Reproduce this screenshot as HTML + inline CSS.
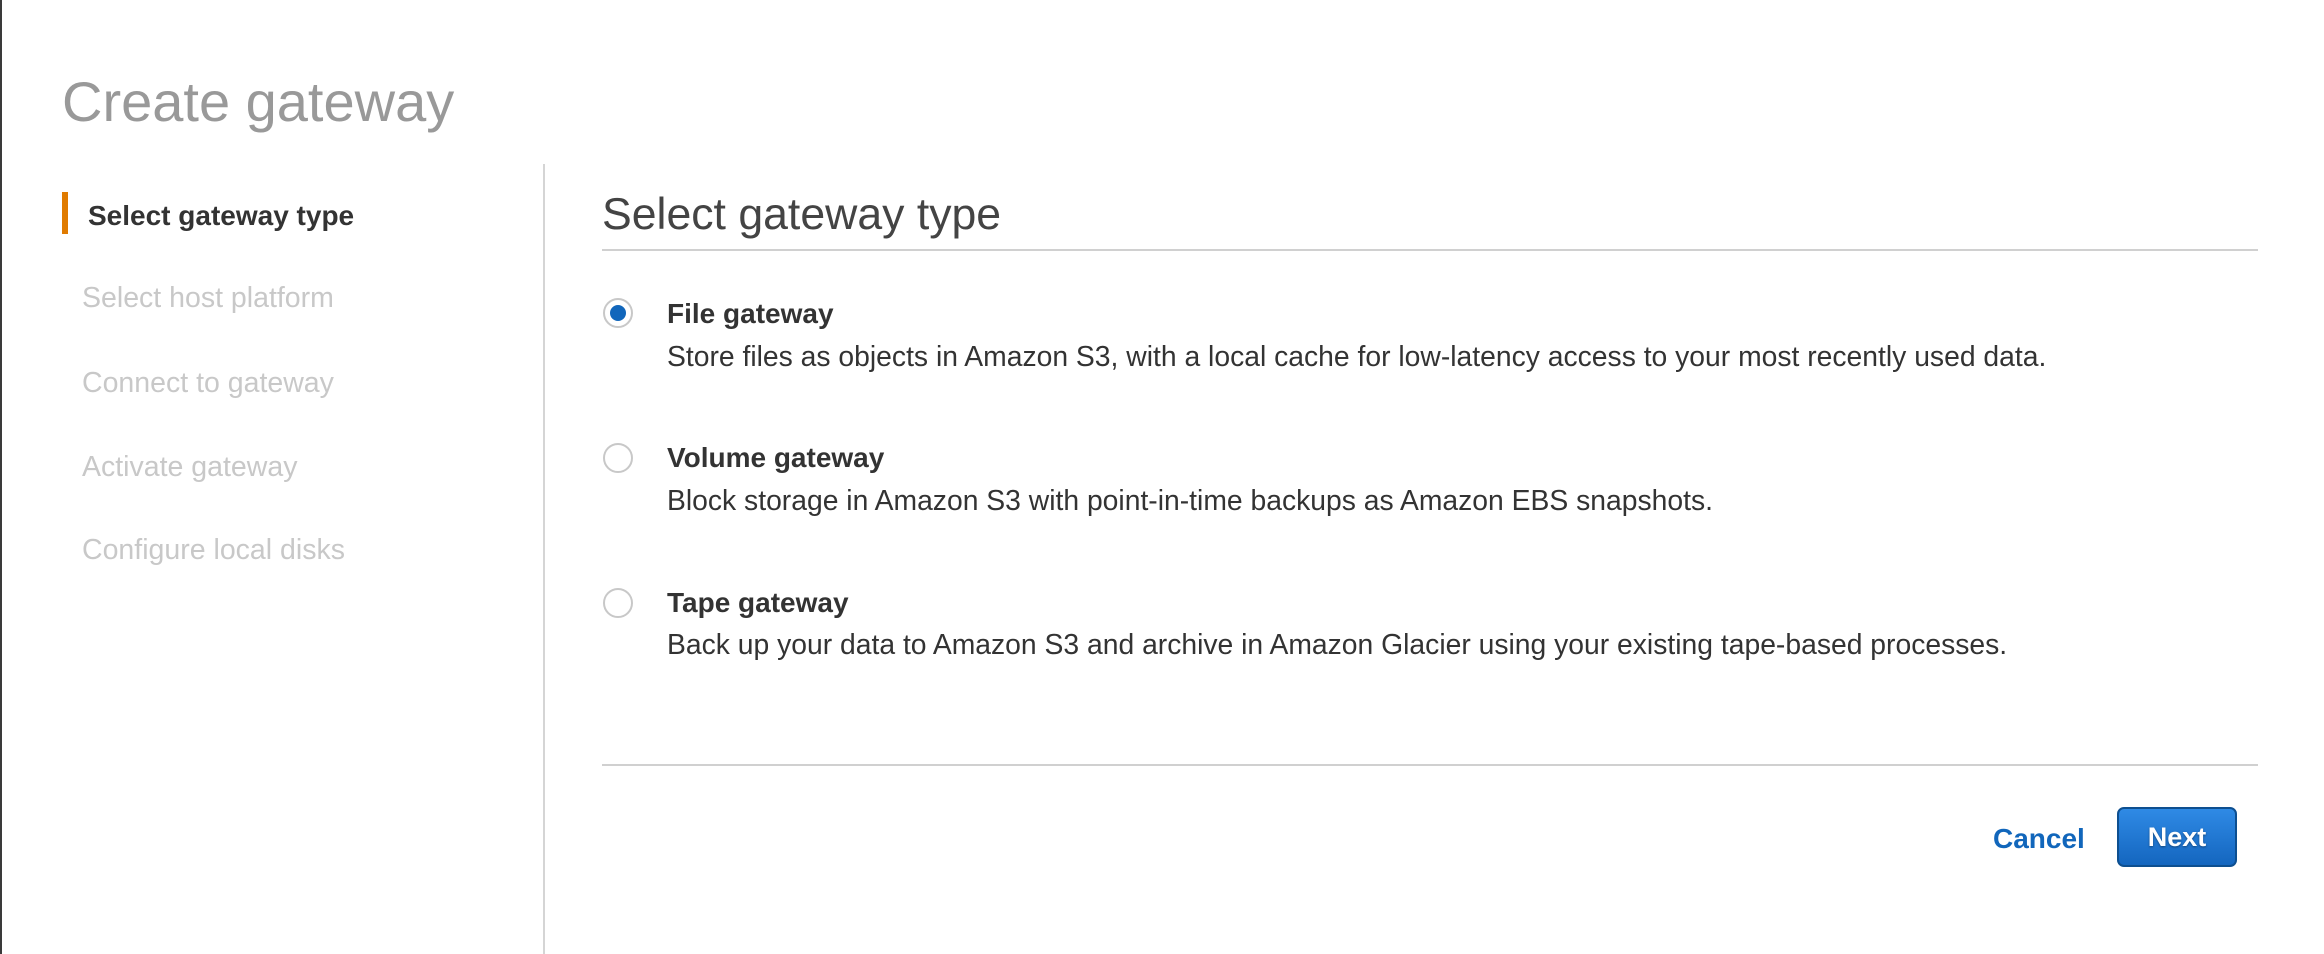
<!DOCTYPE html>
<html><head><meta charset="utf-8"><style>
html,body{margin:0;padding:0;background:#fff;}
body{width:2324px;height:954px;position:relative;overflow:hidden;font-family:"Liberation Sans",Arial,sans-serif;}
.t{position:absolute;white-space:nowrap;line-height:1;}
.radio{position:absolute;width:30px;height:30px;border-radius:50%;border:2px solid #c8c8c8;box-sizing:border-box;background:#fff;}
.radio.on::after{content:"";position:absolute;left:5px;top:5px;width:16px;height:16px;border-radius:50%;background:#1166bb;}
</style></head><body>
<div style="position:absolute;left:0;top:0;width:2px;height:954px;background:#3a3a3a"></div>
<div class="t" style="left:62px;top:74px;font-size:56px;color:#999">Create gateway</div>
<div style="position:absolute;left:543px;top:164px;width:2px;height:790px;background:#d5d5d5"></div>
<div style="position:absolute;left:62px;top:192px;width:6px;height:42px;background:#e07b00"></div>
<div class="t" style="left:88px;top:202px;font-size:28px;font-weight:bold;color:#333">Select gateway type</div>
<div class="t" style="left:82px;top:284px;font-size:28.5px;color:#c8c8c8">Select host platform</div>
<div class="t" style="left:82px;top:369px;font-size:28.5px;color:#c8c8c8">Connect to gateway</div>
<div class="t" style="left:82px;top:453px;font-size:28.5px;color:#c8c8c8">Activate gateway</div>
<div class="t" style="left:82px;top:536px;font-size:28.5px;color:#c8c8c8">Configure local disks</div>

<div class="t" style="left:602px;top:193px;font-size:44.6px;color:#444">Select gateway type</div>
<div style="position:absolute;left:602px;top:249px;width:1656px;height:2px;background:#d0d0d0"></div>

<div class="radio on" style="left:603px;top:298px"></div>
<div class="t" style="left:667px;top:300px;font-size:28px;font-weight:bold;color:#333">File gateway</div>
<div class="t" style="left:667px;top:342px;font-size:28.3px;color:#333">Store files as objects in Amazon S3, with a local cache for low-latency access to your most recently used data.</div>

<div class="radio" style="left:603px;top:443px"></div>
<div class="t" style="left:667px;top:444px;font-size:28px;font-weight:bold;color:#333">Volume gateway</div>
<div class="t" style="left:667px;top:486px;font-size:28.3px;color:#333">Block storage in Amazon S3 with point-in-time backups as Amazon EBS snapshots.</div>

<div class="radio" style="left:603px;top:588px"></div>
<div class="t" style="left:667px;top:589px;font-size:28px;font-weight:bold;color:#333">Tape gateway</div>
<div class="t" style="left:667px;top:630px;font-size:28.3px;color:#333">Back up your data to Amazon S3 and archive in Amazon Glacier using your existing tape-based processes.</div>

<div style="position:absolute;left:602px;top:764px;width:1656px;height:2px;background:#d0d0d0"></div>
<div class="t" style="left:1993px;top:825px;font-size:28px;font-weight:bold;color:#1166bb">Cancel</div>
<div style="position:absolute;left:2117px;top:807px;width:120px;height:60px;box-sizing:border-box;border:2px solid #0d4f90;border-radius:7px;background:linear-gradient(#2f8ae5,#1466bf);color:#fff;font-weight:bold;font-size:27px;text-align:center;line-height:56px;text-shadow:0 1px 2px rgba(0,0,0,.4)">Next</div>
</body></html>
